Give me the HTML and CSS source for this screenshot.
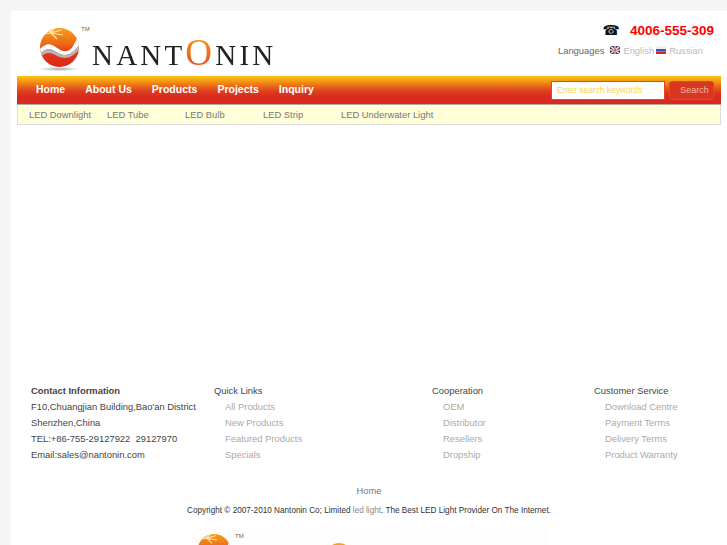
FILE: index.html
```html
<!DOCTYPE html>
<html>
<head>
  <meta charset="utf-8">
  <title>Nantonin LED Light</title>
  <link rel="stylesheet" href="styles.css">
</head>
<body>
  <div class="page">
    <div class="header">
      <div class="logo">
        <svg class="logo-mark" viewBox="0 0 46 48" width="46" height="48">
          <defs>
            <linearGradient id="ball" x1="0" y1="0" x2="0" y2="1">
              <stop offset="0" stop-color="#f7a01c"/>
              <stop offset="0.4" stop-color="#ec6a18"/>
              <stop offset="0.6" stop-color="#e03a18"/>
              <stop offset="1" stop-color="#d92818"/>
            </linearGradient>
            <radialGradient id="shadow">
              <stop offset="0" stop-color="#a8a8a8"/>
              <stop offset="1" stop-color="#fff"/>
            </radialGradient>
            <clipPath id="ballClip"><circle cx="22.5" cy="20.5" r="19.5"/></clipPath>
          </defs>
          <g id="mark">
            <ellipse cx="22" cy="42" rx="21" ry="2.2" fill="url(#shadow)"/>
            <circle cx="22.5" cy="20.5" r="19.5" fill="url(#ball)"/>
            <g clip-path="url(#ballClip)">
              <path d="M14 6L9 1M14 6L14 0M14 6L19 0M14 6L24 3M14 6L26 8M14 6L6 7M14 6L20 12" stroke="#ffe9a8" stroke-width="1.2"/>
              <path d="M1 24C6 18 11 16 15 18C20 20 24 25 30 24C35 23 38 16 41 9L45 15C39 22 34 28 28 28C21 28 17 22 12 22C8 22 5 25 2 28Z" fill="#fff"/>
              <path d="M2 28C5 25 8 22 12 22C17 22 21 28 28 28C34 28 39 22 45 15L45 20C39 26 34 31 28 31C21 31 17 26 12 26C8 26 5 28 3 31Z" fill="#b5b5b5"/>
            </g>
          </g>
        </svg>
        <span class="logo-tm">TM</span>
        <span class="logo-name">NANT<span class="logo-o">O</span>NIN</span>
      </div>
      <div class="header-right">
        <div class="phone"><span class="phone-icon">☎</span><span>4006-555-309</span></div>
        <div class="languages">
          <span class="lang-label">Languages</span>
          <svg class="flag" viewBox="0 0 10 8" width="10" height="8"><rect width="10" height="8" fill="#39447f"/><path d="M0 0L10 8M10 0L0 8" stroke="#eee" stroke-width="1.2"/><path d="M5 0V8M0 4H10" stroke="#eee" stroke-width="2.2"/><path d="M5 0V8M0 4H10" stroke="#c44" stroke-width="1.1"/></svg>
          <a class="lang-link">English</a><svg class="flag flag-ru" viewBox="0 0 10 8" width="10" height="8"><rect width="10" height="3" fill="#f0f0f0"/><rect y="3" width="10" height="2.5" fill="#2b55c8"/><rect y="5.5" width="10" height="2.5" fill="#d8261c"/></svg>
          <a class="lang-link">Russian</a>
        </div>
      </div>
    </div>

    <div class="nav">
      <ul class="nav-menu">
        <li>Home</li>
        <li>About Us</li>
        <li>Products</li>
        <li>Projects</li>
        <li>Inquiry</li>
      </ul>
      <div class="search">
        <input class="search-input" type="text" value="Enter search keywords">
        <button class="search-btn">Search</button>
      </div>
    </div>
    <div class="subnav">
      <a>LED Downlight</a>
      <a>LED Tube</a>
      <a>LED Bulb</a>
      <a>LED Strip</a>
      <a>LED Underwater Light</a>
    </div>

    <div class="content"></div>

    <div class="footer">
      <div class="foot-col contact">
        <h4>Contact Information</h4>
        <p>F10,Chuangjian Building,Bao'an District</p>
        <p>Shenzhen,China</p>
        <p>TEL:+86-755-29127922&nbsp; 29127970</p>
        <p>Email:sales@nantonin.com</p>
      </div>
      <div class="foot-col quick">
        <h5>Quick Links</h5>
        <a>All Products</a>
        <a>New Products</a>
        <a>Featured Products</a>
        <a>Specials</a>
      </div>
      <div class="foot-col coop">
        <h5>Cooperation</h5>
        <a>OEM</a>
        <a>Distributor</a>
        <a>Resellers</a>
        <a>Dropship</a>
      </div>
      <div class="foot-col service">
        <h5>Customer Service</h5>
        <a>Download Centre</a>
        <a>Payment Terms</a>
        <a>Delivery Terms</a>
        <a>Product Warranty</a>
      </div>
    </div>

    <div class="bottom">
      <div class="bottom-home">Home</div>
      <div class="copyright">Copyright © 2007-2010 Nantonin Co; Limited <span class="seo">led light</span>. The Best LED Light Provider On The Internet.</div>
      <div class="logo foot-logo">
        <svg class="logo-mark" viewBox="0 0 46 48" width="39" height="41"><use href="#mark"/></svg>
        <span class="logo-tm">TM</span>
        <div class="foot-o"></div>
      </div>
    </div>
  </div>
</body>
</html>
```

FILE: styles.css
```css
html, body {
  height: 100%;
}

body {
  margin: 0;
  overflow: hidden;
  background: #f5f5f5;
  font-family: "Liberation Sans", Arial, sans-serif;
  font-size: 9.4px;
  color: #555;
}

.page {
  margin: 11px 0 0 11px;
  height: 534px;
  padding: 0 6px;
  background: #fff;
  overflow: hidden;
}

.header {
  display: flex;
  justify-content: space-between;
  height: 65px;
}

.logo {
  position: relative;
  display: flex;
  padding: 16px 0 0 20px;
}

.logo-mark {
  display: block;
  flex: none;
}

.logo-tm {
  position: absolute;
  left: 64px;
  top: 15px;
  font-size: 6px;
  color: #666;
}

.logo-name {
  margin: 10px 0 0 9px;
  font-family: "Liberation Serif", serif;
  font-size: 29px;
  line-height: 32px;
  letter-spacing: 3.2px;
  color: #222;
  height: 32px;
  -webkit-box-reflect: below -9px linear-gradient(transparent 78%, rgba(0,0,0,0.25));
}

.logo-o {
  background: linear-gradient(#f6a21c, #e8401a);
  -webkit-background-clip: text;
  background-clip: text;
  color: transparent;
  font-size: 37px;
}

.header-right {
  padding: 9px 7px 0 0;
  text-align: right;
}

.phone {
  display: flex;
  justify-content: flex-end;
  align-items: center;
  gap: 10px;
  height: 20px;
  font-size: 13.5px;
  font-weight: bold;
  color: #f00;
}

.phone-icon {
  font-family: "DejaVu Sans", sans-serif;
  font-size: 14px;
  font-weight: normal;
  color: #111;
}

.languages {
  display: flex;
  justify-content: flex-end;
  align-items: center;
  margin: 3px 11px 0 0;
  height: 14px;
  color: #666;
}

.lang-label {
  margin-right: 6px;
}

.flag {
  flex: none;
}

.lang-link {
  margin-left: 3px;
  color: #bbb;
}

.flag-ru {
  margin-left: 2px;
}

.nav {
  display: flex;
  justify-content: space-between;
  align-items: center;
  height: 28px;
  background: linear-gradient(#fdc414 0, #f59a14 18%, #e8641a 38%, #dc3a1e 58%, #d82a20 75%);
  border-bottom: 1px solid #b5a79a;
}

.nav-menu {
  display: flex;
  gap: 20px;
  margin: 0;
  padding: 0 0 2px 19px;
  list-style: none;
}

.nav-menu li {
  font-size: 10.5px;
  font-weight: bold;
  color: #fff;
}

.search {
  display: flex;
  align-items: center;
  gap: 4px;
  padding-right: 7px;
}

.search-input {
  box-sizing: border-box;
  width: 114px;
  height: 19px;
  padding: 0 5px;
  border: 1px solid #e2481c;
  background: #fff;
  font-family: inherit;
  font-size: 8.4px;
  color: #fcd34a;
  outline: none;
}

.search-btn {
  width: 45px;
  height: 19px;
  padding: 0 0 0 6px;
  border: 1px solid #de4a2c;
  border-radius: 3px;
  background: #d8361f;
  font-family: inherit;
  font-size: 9px;
  color: #f2b8a8;
}

.subnav {
  display: flex;
  height: 20px;
  align-items: center;
  padding: 0 0 1px 11px;
  box-sizing: border-box;
  background: #ffffd9;
  border: 1px solid #ddd;
  border-top: none;
  color: #777;
}

.subnav a {
  width: 78px;
  white-space: nowrap;
}

.content {
  height: 258px;
}

.footer {
  display: flex;
  line-height: 16px;
  padding-left: 14px;
}

.foot-col h4,
.foot-col h5,
.foot-col p {
  margin: 0;
  font-size: 9.4px;
  color: #444;
}

.foot-col h4 {
  font-weight: bold;
}

.foot-col h5 {
  font-weight: normal;
}

.foot-col a {
  display: block;
  padding-left: 11px;
  color: #aaa;
}

.contact {
  width: 183px;
}

.quick {
  width: 218px;
}

.coop {
  width: 162px;
}

.bottom {
  margin-top: 20px;
  text-align: center;
}

.bottom-home {
  color: #777;
  line-height: 16px;
}

.copyright {
  margin-top: 4px;
  line-height: 16px;
  font-size: 8.2px;
  color: #333;
}

.seo {
  color: #888;
}

.foot-logo {
  width: 354px;
  height: 60px;
  margin: 9px auto 0;
  padding: 5px 0 0 3px;
  box-sizing: border-box;
  background: #fdfdfd;
}

.foot-logo .logo-tm {
  left: 43px;
  top: 5px;
}

.foot-o {
  position: absolute;
  left: 134px;
  top: 15px;
  box-sizing: border-box;
  width: 26px;
  height: 26px;
  border: 3px solid #f6a21c;
  border-radius: 50%;
}
```
